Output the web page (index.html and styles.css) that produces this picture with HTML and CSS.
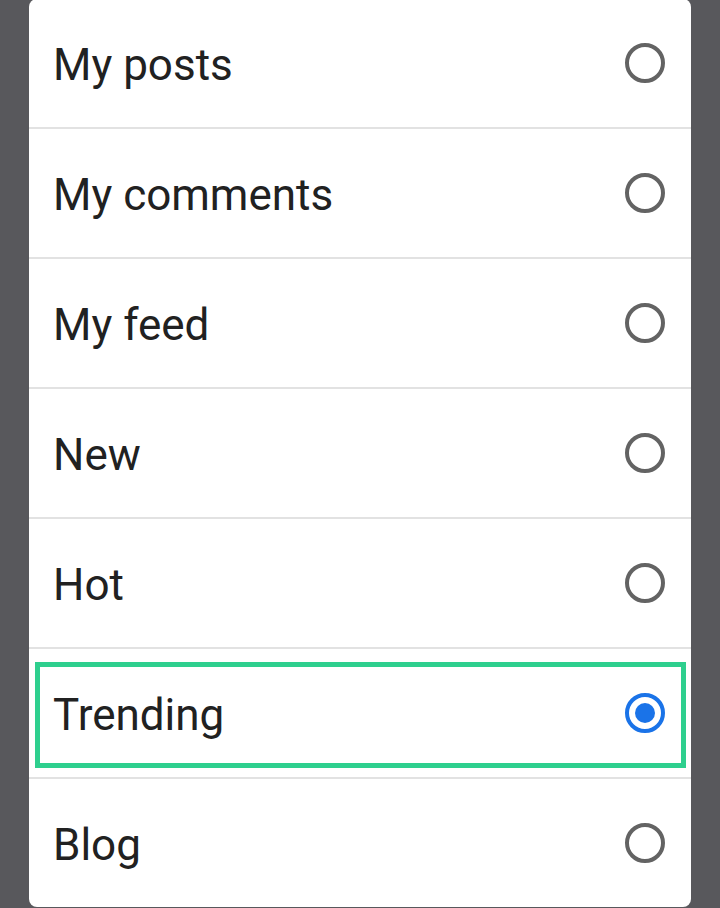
FILE: index.html
```html
<!DOCTYPE html>
<html>
<head>
<meta charset="utf-8">
<link rel="stylesheet" href="styles.css">
</head>
<body>
<div class="screen">
  <div class="dialog">
    <div class="row"><span class="label">My posts</span><span class="radio"></span></div>
    <div class="row"><span class="label">My comments</span><span class="radio"></span></div>
    <div class="row"><span class="label">My feed</span><span class="radio"></span></div>
    <div class="row"><span class="label">New</span><span class="radio"></span></div>
    <div class="row"><span class="label">Hot</span><span class="radio"></span></div>
    <div class="row selected"><span class="label">Trending</span><span class="radio checked"></span><span class="highlight"></span></div>
    <div class="row"><span class="label">Blog</span><span class="radio"></span></div>
  </div>
</div>
</body>
</html>
```
FILE: styles.css
```css
html, body {
  margin: 0;
  padding: 0;
  background: #58585c;
  overflow: hidden;
}
.screen {
  width: 720px;
  height: 908px;
  padding: 0 29px;
  box-sizing: border-box;
}
.dialog {
  margin-top: -1px;
  background: #ffffff;
  border-radius: 8px;
  overflow: hidden;
}
.row {
  position: relative;
  height: 128px;
  border-bottom: 2px solid #e2e2e2;
  display: flex;
  align-items: center;
  justify-content: space-between;
  padding: 0 26px 0 24px;
}
.row:last-child {
  border-bottom: none;
}
.label {
  font-family: Roboto, "Noto Sans", sans-serif;
  font-size: 44px;
  line-height: 1;
  padding-top: 3px;
  color: #212121;
}
.radio {
  width: 40px;
  height: 40px;
  box-sizing: border-box;
  border: 4px solid #636363;
  border-radius: 50%;
  display: flex;
  align-items: center;
  justify-content: center;
}
.radio.checked {
  border-color: #1a73e8;
}
.radio.checked::after {
  content: "";
  width: 20px;
  height: 20px;
  border-radius: 50%;
  background: #1a73e8;
}
.highlight {
  position: absolute;
  left: 6px;
  right: 5px;
  top: 13px;
  bottom: 9px;
  border: 5px solid #2ecf8e;
}
```
